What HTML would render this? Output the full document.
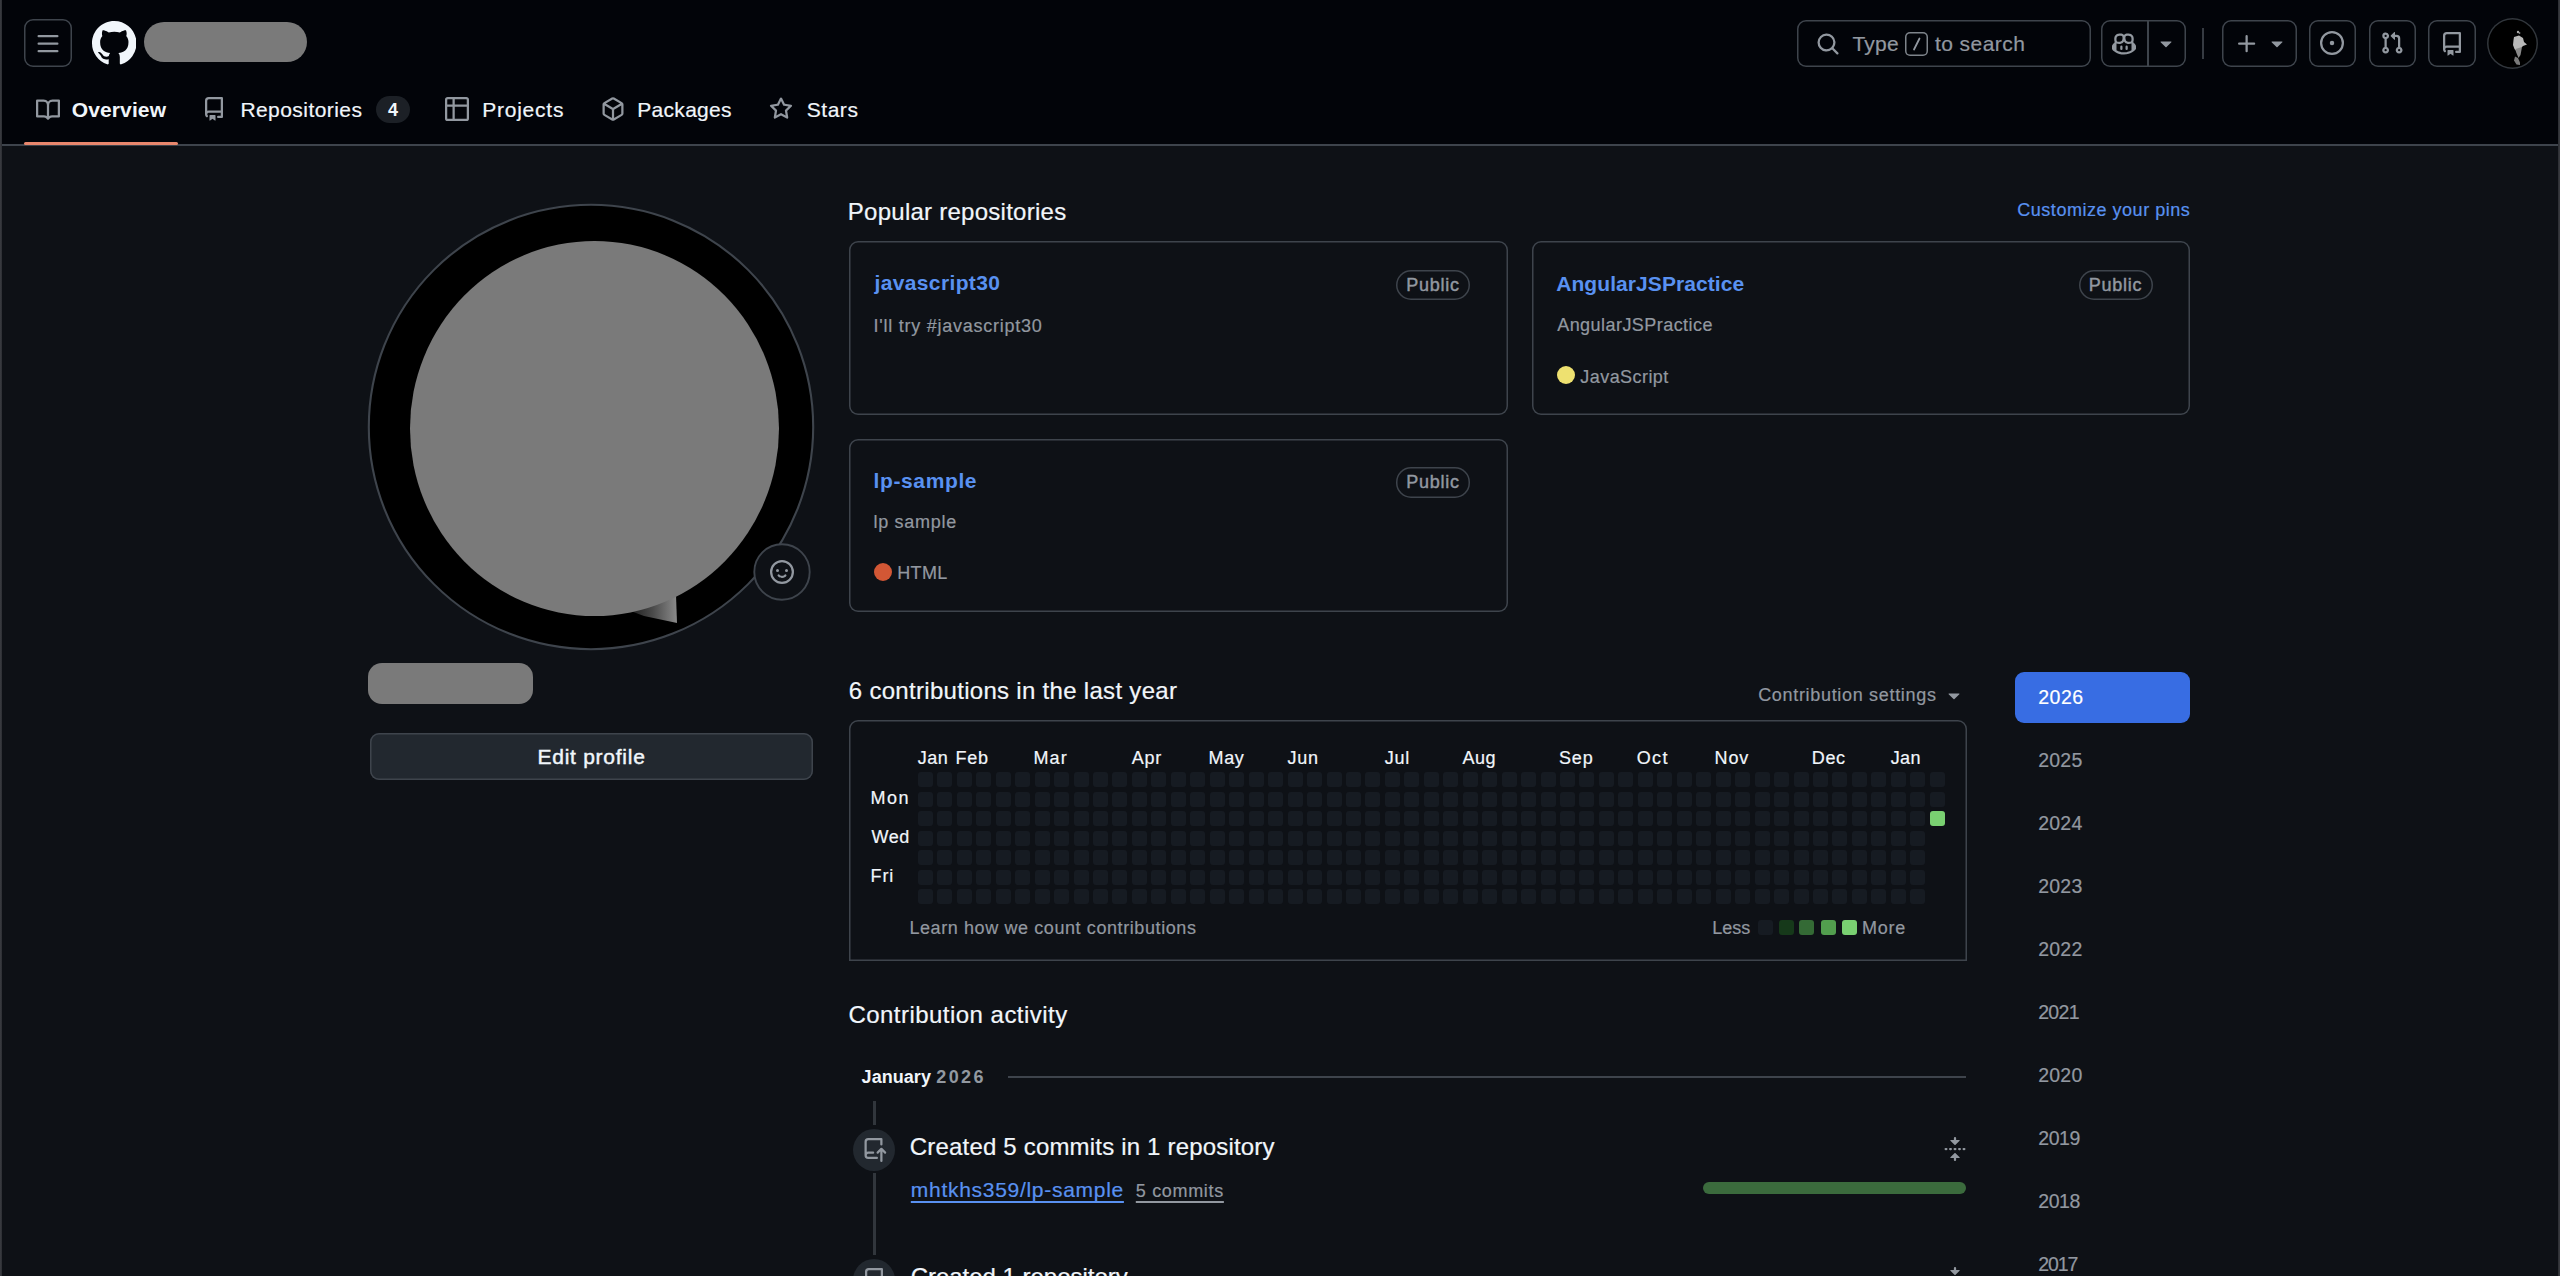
<!DOCTYPE html>
<html><head><meta charset="utf-8"><title>GitHub profile</title>
<style>
html,body{margin:0;padding:0;width:2560px;height:1276px;overflow:hidden;background:#0e1116;}
body{position:relative;font-family:"Liberation Sans",sans-serif;color:#f1f6fb;}
.t{position:absolute;white-space:nowrap;}
.a{position:absolute;box-sizing:border-box;}
.ic{position:absolute;width:24px;height:24px;fill:#9298a0;}
.bx{position:absolute;box-sizing:border-box;box-shadow:inset 0 0 0 1.5px #3e444c;border-radius:9px;}
#cells i{position:absolute;width:15px;height:15px;border-radius:3px;display:block;}
</style></head><body>
<!-- header -->
<div class="a" style="left:0;top:0;width:2560px;height:144px;background:#020409;"></div>
<div class="a" style="left:0;top:144px;width:2560px;height:1.5px;background:#3e444c;"></div>
<div class="a" style="left:24px;top:142px;width:154px;height:3px;background:#e8876d;border-radius:2px;"></div>

<div class="bx" style="left:24px;top:19px;width:48px;height:48px;"></div>
<svg class="ic" style="left:36px;top:31.5px;" viewBox="0 0 16 16"><path d="M1 2.75A.75.75 0 0 1 1.75 2h12.5a.75.75 0 0 1 0 1.5H1.75A.75.75 0 0 1 1 2.75Zm0 5A.75.75 0 0 1 1.75 7h12.5a.75.75 0 0 1 0 1.5H1.75A.75.75 0 0 1 1 7.75ZM1.75 12h12.5a.75.75 0 0 1 0 1.5H1.75a.75.75 0 0 1 0-1.5Z"/></svg>
<svg style="position:absolute;left:91.8px;top:21.3px;width:44.5px;height:44.5px;fill:#f1f6fb" viewBox="0 0 16 16"><path d="M8 0c4.42 0 8 3.58 8 8a8.013 8.013 0 0 1-5.45 7.59c-.4.08-.55-.17-.55-.38 0-.27.01-1.13.01-2.2 0-.75-.25-1.23-.54-1.48 1.78-.2 3.65-.88 3.65-3.95 0-.88-.31-1.59-.82-2.15.08-.2.36-1.02-.08-2.12 0 0-.67-.22-2.2.82-.64-.18-1.32-.27-2-.27-.68 0-1.36.09-2 .27-1.53-1.03-2.2-.82-2.2-.82-.44 1.1-.16 1.92-.08 2.12-.51.56-.82 1.28-.82 2.15 0 3.06 1.86 3.75 3.64 3.95-.23.2-.44.55-.51 1.07-.46.21-1.61.55-2.33-.66-.15-.24-.6-.83-1.23-.82-.67.01-.27.38.01.53.34.19.73.9.82 1.13.16.45.68 1.31 2.69.94 0 .67.01 1.3.01 1.49 0 .21-.15.45-.55.38A7.995 7.995 0 0 1 0 8c0-4.42 3.58-8 8-8Z"/></svg>
<div class="a" style="left:144px;top:22px;width:163px;height:40px;background:#7a7a7a;border-radius:20px;"></div>

<!-- tabs icons -->
<svg class="ic" style="left:36px;top:97.5px;" viewBox="0 0 16 16"><path d="M0 1.75A.75.75 0 0 1 .75 1h4.253c1.227 0 2.317.59 3 1.501A3.743 3.743 0 0 1 11.006 1h4.245a.75.75 0 0 1 .75.75v10.5a.75.75 0 0 1-.75.75h-4.507a2.25 2.25 0 0 0-1.591.659l-.622.621a.75.75 0 0 1-1.06 0l-.622-.621A2.25 2.25 0 0 0 5.258 13H.75a.75.75 0 0 1-.75-.75Zm7.251 10.324.004-5.073-.002-2.253A2.25 2.25 0 0 0 5.003 2.5H1.5v9h3.757a3.75 3.75 0 0 1 1.994.574ZM8.755 4.75l-.004 7.322a3.752 3.752 0 0 1 1.992-.572H14.5v-9h-3.495a2.25 2.25 0 0 0-2.25 2.25Z"/></svg>
<svg class="ic" style="left:202px;top:97px;" viewBox="0 0 16 16"><path d="M2 2.5A2.5 2.5 0 0 1 4.5 0h8.75a.75.75 0 0 1 .75.75v12.5a.75.75 0 0 1-.75.75h-2.5a.75.75 0 0 1 0-1.5h1.75v-2h-8a1 1 0 0 0-.714 1.7.75.75 0 1 1-1.072 1.05A2.495 2.495 0 0 1 2 11.5Zm10.5-1h-8a1 1 0 0 0-1 1v6.708A2.486 2.486 0 0 1 4.5 9h8ZM5 12.25a.25.25 0 0 1 .25-.25h3.5a.25.25 0 0 1 .25.25v3.25a.25.25 0 0 1-.4.2l-1.45-1.087a.249.249 0 0 0-.3 0L5.4 15.7a.25.25 0 0 1-.4-.2Z"/></svg>
<div class="a" style="left:376px;top:96px;width:34px;height:27px;border-radius:14px;background:#1c2026;"></div>
<svg class="ic" style="left:445px;top:97px;" viewBox="0 0 16 16"><path d="M0 1.75C0 .784.784 0 1.75 0h12.5C15.216 0 16 .784 16 1.75v12.5A1.75 1.75 0 0 1 14.25 16H1.75A1.75 1.75 0 0 1 0 14.25ZM6.5 6.5v8h7.75a.25.25 0 0 0 .25-.25V6.5Zm8-1.5V1.75a.25.25 0 0 0-.25-.25H6.5V5Zm-13 1.5v7.75c0 .138.112.25.25.25H5v-8ZM5 5V1.5H1.75a.25.25 0 0 0-.25.25V5Z"/></svg>
<svg class="ic" style="left:600.5px;top:97px;" viewBox="0 0 16 16"><path d="m8.878.392 5.25 3.045c.54.314.872.89.872 1.514v6.098a1.75 1.75 0 0 1-.872 1.514l-5.25 3.045a1.75 1.75 0 0 1-1.756 0l-5.25-3.045A1.75 1.75 0 0 1 1 11.049V4.951c0-.624.332-1.201.872-1.514L7.122.392a1.75 1.75 0 0 1 1.756 0ZM7.875 1.69l-4.63 2.685L8 7.133l4.755-2.758-4.63-2.685a.248.248 0 0 0-.25 0ZM2.5 5.677v5.372c0 .09.047.171.125.216l4.625 2.683V8.432Zm6.25 8.271 4.625-2.683a.25.25 0 0 0 .125-.216V5.677L8.75 8.432Z"/></svg>
<svg class="ic" style="left:769px;top:97px;" viewBox="0 0 16 16"><path d="M8 .25a.75.75 0 0 1 .673.418l1.882 3.815 4.21.612a.75.75 0 0 1 .416 1.279l-3.046 2.97.719 4.192a.751.751 0 0 1-1.088.791L8 12.347l-3.766 1.98a.75.75 0 0 1-1.088-.79l.72-4.194L.818 6.374a.75.75 0 0 1 .416-1.28l4.21-.611L7.327.668A.75.75 0 0 1 8 .25Zm0 2.445L6.615 5.5a.75.75 0 0 1-.564.41l-3.097.45 2.24 2.184a.75.75 0 0 1 .216.664l-.528 3.084 2.769-1.456a.75.75 0 0 1 .698 0l2.77 1.456-.53-3.084a.75.75 0 0 1 .216-.664l2.24-2.183-3.096-.45a.75.75 0 0 1-.564-.41L8 2.694Z"/></svg>

<!-- header right -->
<div class="bx" style="left:1797px;top:20px;width:294px;height:47px;"></div>
<svg class="ic" style="left:1816px;top:32px;" viewBox="0 0 16 16"><path d="M10.68 11.74a6 6 0 0 1-7.922-8.982 6 6 0 0 1 8.982 7.922l3.04 3.04a.749.749 0 0 1-.326 1.275.749.749 0 0 1-.734-.215ZM11.5 7a4.499 4.499 0 1 0-8.997 0A4.499 4.499 0 0 0 11.5 7Z"/></svg>
<div class="a" style="left:1904.5px;top:31.5px;width:23.5px;height:24px;box-shadow:inset 0 0 0 1.5px #7e848b;border-radius:5px;"></div>
<svg style="position:absolute;left:1904.5px;top:31.5px;width:23.5px;height:24px;" viewBox="0 0 23.5 24"><path d="M14.5 6.5 L9 17.5" stroke="#9298a0" stroke-width="1.8" fill="none" stroke-linecap="round"/></svg>

<div class="bx" style="left:2100.5px;top:20px;width:85px;height:47px;"></div>
<div class="a" style="left:2147px;top:20px;width:1.5px;height:47px;background:#3e444c;"></div>
<svg class="ic" style="left:2112px;top:32px;" viewBox="0 0 16 16"><path d="M7.998 15.035c-4.562 0-7.873-2.914-7.998-3.749V9.338c.085-.628.677-1.686 1.588-2.065.013-.07.024-.143.036-.218.029-.183.06-.384.126-.612-.201-.508-.254-1.084-.254-1.656 0-.87.128-1.769.693-2.484.579-.733 1.494-1.124 2.724-1.261 1.206-.134 2.262.034 2.944.765.05.053.096.108.139.165.044-.057.094-.112.143-.165.682-.731 1.738-.899 2.944-.765 1.23.137 2.145.528 2.724 1.261.566.715.693 1.614.693 2.484 0 .572-.053 1.148-.254 1.656.066.228.098.429.126.612.012.076.024.148.037.218.924.385 1.522 1.471 1.591 2.095v1.872c0 .766-3.351 3.795-8.002 3.795Zm0-1.485c2.28 0 4.584-1.11 5.002-1.433V7.862l-.023-.116c-.49.21-1.075.291-1.727.291-1.146 0-2.059-.327-2.71-.991A3.222 3.222 0 0 1 8 6.303a3.24 3.24 0 0 1-.544.743c-.65.664-1.563.991-2.71.991-.652 0-1.236-.081-1.727-.291l-.023.116v4.255c.419.323 2.722 1.433 5.002 1.433ZM6.762 2.83c-.193-.206-.637-.413-1.682-.297-1.019.113-1.479.404-1.713.7-.247.312-.369.789-.369 1.554 0 .793.129 1.171.308 1.371.162.181.519.379 1.442.379.853 0 1.339-.235 1.638-.54.315-.322.527-.827.617-1.553.117-.935-.037-1.395-.241-1.614Zm4.155-.297c-1.044-.116-1.488.091-1.681.297-.204.219-.359.679-.242 1.614.091.726.303 1.231.618 1.553.299.305.784.54 1.638.54.922 0 1.28-.198 1.442-.379.179-.2.308-.578.308-1.371 0-.765-.123-1.242-.37-1.554-.233-.296-.693-.587-1.713-.7Z"/><path d="M6.25 9.037a.75.75 0 0 1 .75.75v1.501a.75.75 0 0 1-1.5 0V9.787a.75.75 0 0 1 .75-.75Zm4.25.75v1.501a.75.75 0 0 1-1.5 0V9.787a.75.75 0 0 1 1.5 0Z"/></svg>
<svg class="ic" style="left:2153.5px;top:31px;" viewBox="0 0 16 16"><path d="m4.427 7.427 3.396 3.396a.25.25 0 0 0 .354 0l3.396-3.396A.25.25 0 0 0 11.396 7H4.604a.25.25 0 0 0-.177.427Z"/></svg>
<div class="a" style="left:2202px;top:28px;width:2px;height:30.5px;background:#363b42;"></div>

<div class="bx" style="left:2222px;top:20px;width:74.5px;height:47px;"></div>
<svg class="ic" style="left:2235px;top:31.5px;" viewBox="0 0 16 16"><path d="M7.75 2a.75.75 0 0 1 .75.75V7h4.25a.75.75 0 0 1 0 1.5H8.5v4.25a.75.75 0 0 1-1.5 0V8.5H2.75a.75.75 0 0 1 0-1.5H7V2.75A.75.75 0 0 1 7.75 2Z"/></svg>
<svg class="ic" style="left:2265px;top:31px;" viewBox="0 0 16 16"><path d="m4.427 7.427 3.396 3.396a.25.25 0 0 0 .354 0l3.396-3.396A.25.25 0 0 0 11.396 7H4.604a.25.25 0 0 0-.177.427Z"/></svg>
<div class="bx" style="left:2308.5px;top:20px;width:47.5px;height:47px;"></div>
<svg class="ic" style="left:2320px;top:31px;" viewBox="0 0 16 16"><path d="M8 9.5a1.5 1.5 0 1 0 0-3 1.5 1.5 0 0 0 0 3Z"/><path d="M8 0a8 8 0 1 1 0 16A8 8 0 0 1 8 0ZM1.5 8a6.5 6.5 0 1 0 13 0 6.5 6.5 0 0 0-13 0Z"/></svg>
<div class="bx" style="left:2368.5px;top:20px;width:47.5px;height:47px;"></div>
<svg class="ic" style="left:2379.8px;top:31px;" viewBox="0 0 16 16"><path d="M1.5 3.25a2.25 2.25 0 1 1 3 2.122v5.256a2.251 2.251 0 1 1-1.5 0V5.372A2.25 2.25 0 0 1 1.5 3.25Zm5.677-.177L9.573.677A.25.25 0 0 1 10 .854V2.5h1A2.5 2.5 0 0 1 13.5 5v5.628a2.251 2.251 0 1 1-1.5 0V5a1 1 0 0 0-1-1h-1v1.646a.25.25 0 0 1-.427.177L7.177 3.427a.25.25 0 0 1 0-.354ZM3.75 2.5a.75.75 0 1 0 0 1.5.75.75 0 0 0 0-1.5Zm0 9.5a.75.75 0 1 0 0 1.5.75.75 0 0 0 0-1.5Zm8.25.75a.75.75 0 1 0 1.5 0 .75.75 0 0 0-1.5 0Z"/></svg>
<div class="bx" style="left:2428px;top:20px;width:48px;height:47px;"></div>
<svg class="ic" style="left:2440px;top:31.5px;" viewBox="0 0 16 16"><path d="M2 2.5A2.5 2.5 0 0 1 4.5 0h8.75a.75.75 0 0 1 .75.75v12.5a.75.75 0 0 1-.75.75h-2.5a.75.75 0 0 1 0-1.5h1.75v-2h-8a1 1 0 0 0-.714 1.7.75.75 0 1 1-1.072 1.05A2.495 2.495 0 0 1 2 11.5Zm10.5-1h-8a1 1 0 0 0-1 1v6.708A2.486 2.486 0 0 1 4.5 9h8ZM5 12.25a.25.25 0 0 1 .25-.25h3.5a.25.25 0 0 1 .25.25v3.25a.25.25 0 0 1-.4.2l-1.45-1.087a.249.249 0 0 0-.3 0L5.4 15.7a.25.25 0 0 1-.4-.2Z"/></svg>
<div class="a" style="left:2486.5px;top:17.7px;width:51px;height:51px;border-radius:50%;background:#000;box-shadow:inset 0 0 0 1.5px #31363c;"></div>
<svg style="position:absolute;left:2486.5px;top:17.7px;width:51px;height:51px" viewBox="0 0 51 51"><path d="M27 19 L32 17.5 L36 20 L37 24 L40 26.5 L36 28 L33 31 L30 34 L27.5 31 L26 27 L26.5 22 Z" fill="#b8b8b8"/><path d="M28.5 31 L35 29 L33.5 37 L31.5 40 L29 34 Z" fill="#8a8a8a"/><path d="M28 38.5 L31 40 L33 44.5 L33 47 L29.5 46.5 L27 42.5 Z" fill="#7a7a7a"/><circle cx="31" cy="14" r="1.2" fill="#aaa"/><circle cx="32.5" cy="15" r="0.9" fill="#888"/></svg>

<!-- window edges -->
<div class="a" style="left:0;top:0;width:2px;height:1276px;background:linear-gradient(90deg,#3c3e43,#2b2d32);"></div>
<div class="a" style="left:2557.5px;top:0;width:2.5px;height:1276px;background:linear-gradient(90deg,#2b2d32,#3c3e43);"></div>

<!-- sidebar -->
<svg style="position:absolute;left:361.25px;top:196.6px;width:460px;height:460px" viewBox="0 0 460 460"><circle cx="230" cy="230" r="222.2" fill="#000" stroke="#3e444c" stroke-width="2.1"/></svg>
<svg style="position:absolute;left:620px;top:590px;width:70px;height:40px" viewBox="0 0 70 40"><defs><linearGradient id="g1" x1="0" x2="1"><stop offset="0" stop-color="#1a1a1a"/><stop offset="0.5" stop-color="#4a4a4a"/><stop offset="1" stop-color="#8a8a8a"/></linearGradient></defs><path d="M8 20 L56 5 L57 33 L24 26 Z" fill="url(#g1)"/></svg>
<div class="a" style="left:409.5px;top:240.7px;width:369.3px;height:375px;border-radius:50%;background:#7a7a7a;"></div>
<svg style="position:absolute;left:751.5px;top:542px;width:60px;height:60px" viewBox="0 0 60 60"><circle cx="30" cy="30" r="27.7" fill="#0e1116" stroke="#3e444c" stroke-width="1.9"/></svg>
<svg class="ic" style="left:769.5px;top:560px;" viewBox="0 0 16 16"><path d="M8 0a8 8 0 1 1 0 16A8 8 0 0 1 8 0ZM1.5 8a6.5 6.5 0 1 0 13 0 6.5 6.5 0 0 0-13 0Zm3.82 1.636a.75.75 0 0 1 1.038.175l.007.009c.103.118.22.222.35.31.264.178.683.37 1.285.37.602 0 1.02-.192 1.285-.371.13-.088.247-.192.35-.31l.007-.008a.75.75 0 0 1 1.222.87l-.022-.015c.02.013.021.015.021.015v.001l-.001.002-.002.003-.005.007-.014.019a2.066 2.066 0 0 1-.184.213c-.16.166-.338.316-.53.445-.63.418-1.37.638-2.127.629-.946 0-1.652-.308-2.126-.63a3.331 3.331 0 0 1-.715-.657l-.014-.02-.005-.006-.002-.003v-.002h-.001l.613-.432-.614.43a.75.75 0 0 1 .183-1.044ZM12 7a1 1 0 1 1-2 0 1 1 0 0 1 2 0ZM5 8a1 1 0 1 1 0-2 1 1 0 0 1 0 2Zm5.25 2.25.592.416a97.71 97.71 0 0 0-.592-.416Z"/></svg>
<div class="a" style="left:368.4px;top:663px;width:164.5px;height:41px;border-radius:14px;background:#7a7a7a;"></div>
<div class="bx" style="left:370px;top:732.5px;width:443px;height:47.5px;background:#22282f;"></div>

<!-- popular repos -->
<div class="bx" style="left:849px;top:241px;width:658.5px;height:174px;"></div>
<div class="bx" style="left:1531.5px;top:241px;width:658.5px;height:174px;"></div>
<div class="bx" style="left:849px;top:439px;width:658.5px;height:172.5px;"></div>
<div class="bx" style="left:1396px;top:269.5px;width:74px;height:30.5px;border-radius:15px;"></div>
<div class="bx" style="left:2078.5px;top:269.5px;width:74px;height:30.5px;border-radius:15px;"></div>
<div class="bx" style="left:1396px;top:467px;width:74px;height:30.5px;border-radius:15px;"></div>
<div class="a" style="left:1557px;top:366px;width:18px;height:18px;border-radius:50%;background:#eee170;"></div>
<div class="a" style="left:874.2px;top:563px;width:18px;height:18px;border-radius:50%;background:#d25735;"></div>

<!-- contributions -->
<svg class="ic" style="left:1942px;top:683px;" viewBox="0 0 16 16"><path d="m4.427 7.427 3.396 3.396a.25.25 0 0 0 .354 0l3.396-3.396A.25.25 0 0 0 11.396 7H4.604a.25.25 0 0 0-.177.427Z"/></svg>
<div class="bx" style="left:849px;top:720px;width:1117.5px;height:241px;border-radius:9px 9px 0 0;"></div>
<div id="cells"><i style="left:917.8px;top:772.0px;background:#161b22"></i><i style="left:917.8px;top:791.5px;background:#161b22"></i><i style="left:917.8px;top:811.0px;background:#161b22"></i><i style="left:917.8px;top:830.5px;background:#161b22"></i><i style="left:917.8px;top:850.0px;background:#161b22"></i><i style="left:917.8px;top:869.5px;background:#161b22"></i><i style="left:917.8px;top:889.0px;background:#161b22"></i><i style="left:937.3px;top:772.0px;background:#161b22"></i><i style="left:937.3px;top:791.5px;background:#161b22"></i><i style="left:937.3px;top:811.0px;background:#161b22"></i><i style="left:937.3px;top:830.5px;background:#161b22"></i><i style="left:937.3px;top:850.0px;background:#161b22"></i><i style="left:937.3px;top:869.5px;background:#161b22"></i><i style="left:937.3px;top:889.0px;background:#161b22"></i><i style="left:956.7px;top:772.0px;background:#161b22"></i><i style="left:956.7px;top:791.5px;background:#161b22"></i><i style="left:956.7px;top:811.0px;background:#161b22"></i><i style="left:956.7px;top:830.5px;background:#161b22"></i><i style="left:956.7px;top:850.0px;background:#161b22"></i><i style="left:956.7px;top:869.5px;background:#161b22"></i><i style="left:956.7px;top:889.0px;background:#161b22"></i><i style="left:976.2px;top:772.0px;background:#161b22"></i><i style="left:976.2px;top:791.5px;background:#161b22"></i><i style="left:976.2px;top:811.0px;background:#161b22"></i><i style="left:976.2px;top:830.5px;background:#161b22"></i><i style="left:976.2px;top:850.0px;background:#161b22"></i><i style="left:976.2px;top:869.5px;background:#161b22"></i><i style="left:976.2px;top:889.0px;background:#161b22"></i><i style="left:995.6px;top:772.0px;background:#161b22"></i><i style="left:995.6px;top:791.5px;background:#161b22"></i><i style="left:995.6px;top:811.0px;background:#161b22"></i><i style="left:995.6px;top:830.5px;background:#161b22"></i><i style="left:995.6px;top:850.0px;background:#161b22"></i><i style="left:995.6px;top:869.5px;background:#161b22"></i><i style="left:995.6px;top:889.0px;background:#161b22"></i><i style="left:1015.1px;top:772.0px;background:#161b22"></i><i style="left:1015.1px;top:791.5px;background:#161b22"></i><i style="left:1015.1px;top:811.0px;background:#161b22"></i><i style="left:1015.1px;top:830.5px;background:#161b22"></i><i style="left:1015.1px;top:850.0px;background:#161b22"></i><i style="left:1015.1px;top:869.5px;background:#161b22"></i><i style="left:1015.1px;top:889.0px;background:#161b22"></i><i style="left:1034.6px;top:772.0px;background:#161b22"></i><i style="left:1034.6px;top:791.5px;background:#161b22"></i><i style="left:1034.6px;top:811.0px;background:#161b22"></i><i style="left:1034.6px;top:830.5px;background:#161b22"></i><i style="left:1034.6px;top:850.0px;background:#161b22"></i><i style="left:1034.6px;top:869.5px;background:#161b22"></i><i style="left:1034.6px;top:889.0px;background:#161b22"></i><i style="left:1054.0px;top:772.0px;background:#161b22"></i><i style="left:1054.0px;top:791.5px;background:#161b22"></i><i style="left:1054.0px;top:811.0px;background:#161b22"></i><i style="left:1054.0px;top:830.5px;background:#161b22"></i><i style="left:1054.0px;top:850.0px;background:#161b22"></i><i style="left:1054.0px;top:869.5px;background:#161b22"></i><i style="left:1054.0px;top:889.0px;background:#161b22"></i><i style="left:1073.5px;top:772.0px;background:#161b22"></i><i style="left:1073.5px;top:791.5px;background:#161b22"></i><i style="left:1073.5px;top:811.0px;background:#161b22"></i><i style="left:1073.5px;top:830.5px;background:#161b22"></i><i style="left:1073.5px;top:850.0px;background:#161b22"></i><i style="left:1073.5px;top:869.5px;background:#161b22"></i><i style="left:1073.5px;top:889.0px;background:#161b22"></i><i style="left:1092.9px;top:772.0px;background:#161b22"></i><i style="left:1092.9px;top:791.5px;background:#161b22"></i><i style="left:1092.9px;top:811.0px;background:#161b22"></i><i style="left:1092.9px;top:830.5px;background:#161b22"></i><i style="left:1092.9px;top:850.0px;background:#161b22"></i><i style="left:1092.9px;top:869.5px;background:#161b22"></i><i style="left:1092.9px;top:889.0px;background:#161b22"></i><i style="left:1112.4px;top:772.0px;background:#161b22"></i><i style="left:1112.4px;top:791.5px;background:#161b22"></i><i style="left:1112.4px;top:811.0px;background:#161b22"></i><i style="left:1112.4px;top:830.5px;background:#161b22"></i><i style="left:1112.4px;top:850.0px;background:#161b22"></i><i style="left:1112.4px;top:869.5px;background:#161b22"></i><i style="left:1112.4px;top:889.0px;background:#161b22"></i><i style="left:1131.9px;top:772.0px;background:#161b22"></i><i style="left:1131.9px;top:791.5px;background:#161b22"></i><i style="left:1131.9px;top:811.0px;background:#161b22"></i><i style="left:1131.9px;top:830.5px;background:#161b22"></i><i style="left:1131.9px;top:850.0px;background:#161b22"></i><i style="left:1131.9px;top:869.5px;background:#161b22"></i><i style="left:1131.9px;top:889.0px;background:#161b22"></i><i style="left:1151.3px;top:772.0px;background:#161b22"></i><i style="left:1151.3px;top:791.5px;background:#161b22"></i><i style="left:1151.3px;top:811.0px;background:#161b22"></i><i style="left:1151.3px;top:830.5px;background:#161b22"></i><i style="left:1151.3px;top:850.0px;background:#161b22"></i><i style="left:1151.3px;top:869.5px;background:#161b22"></i><i style="left:1151.3px;top:889.0px;background:#161b22"></i><i style="left:1170.8px;top:772.0px;background:#161b22"></i><i style="left:1170.8px;top:791.5px;background:#161b22"></i><i style="left:1170.8px;top:811.0px;background:#161b22"></i><i style="left:1170.8px;top:830.5px;background:#161b22"></i><i style="left:1170.8px;top:850.0px;background:#161b22"></i><i style="left:1170.8px;top:869.5px;background:#161b22"></i><i style="left:1170.8px;top:889.0px;background:#161b22"></i><i style="left:1190.2px;top:772.0px;background:#161b22"></i><i style="left:1190.2px;top:791.5px;background:#161b22"></i><i style="left:1190.2px;top:811.0px;background:#161b22"></i><i style="left:1190.2px;top:830.5px;background:#161b22"></i><i style="left:1190.2px;top:850.0px;background:#161b22"></i><i style="left:1190.2px;top:869.5px;background:#161b22"></i><i style="left:1190.2px;top:889.0px;background:#161b22"></i><i style="left:1209.7px;top:772.0px;background:#161b22"></i><i style="left:1209.7px;top:791.5px;background:#161b22"></i><i style="left:1209.7px;top:811.0px;background:#161b22"></i><i style="left:1209.7px;top:830.5px;background:#161b22"></i><i style="left:1209.7px;top:850.0px;background:#161b22"></i><i style="left:1209.7px;top:869.5px;background:#161b22"></i><i style="left:1209.7px;top:889.0px;background:#161b22"></i><i style="left:1229.2px;top:772.0px;background:#161b22"></i><i style="left:1229.2px;top:791.5px;background:#161b22"></i><i style="left:1229.2px;top:811.0px;background:#161b22"></i><i style="left:1229.2px;top:830.5px;background:#161b22"></i><i style="left:1229.2px;top:850.0px;background:#161b22"></i><i style="left:1229.2px;top:869.5px;background:#161b22"></i><i style="left:1229.2px;top:889.0px;background:#161b22"></i><i style="left:1248.6px;top:772.0px;background:#161b22"></i><i style="left:1248.6px;top:791.5px;background:#161b22"></i><i style="left:1248.6px;top:811.0px;background:#161b22"></i><i style="left:1248.6px;top:830.5px;background:#161b22"></i><i style="left:1248.6px;top:850.0px;background:#161b22"></i><i style="left:1248.6px;top:869.5px;background:#161b22"></i><i style="left:1248.6px;top:889.0px;background:#161b22"></i><i style="left:1268.1px;top:772.0px;background:#161b22"></i><i style="left:1268.1px;top:791.5px;background:#161b22"></i><i style="left:1268.1px;top:811.0px;background:#161b22"></i><i style="left:1268.1px;top:830.5px;background:#161b22"></i><i style="left:1268.1px;top:850.0px;background:#161b22"></i><i style="left:1268.1px;top:869.5px;background:#161b22"></i><i style="left:1268.1px;top:889.0px;background:#161b22"></i><i style="left:1287.5px;top:772.0px;background:#161b22"></i><i style="left:1287.5px;top:791.5px;background:#161b22"></i><i style="left:1287.5px;top:811.0px;background:#161b22"></i><i style="left:1287.5px;top:830.5px;background:#161b22"></i><i style="left:1287.5px;top:850.0px;background:#161b22"></i><i style="left:1287.5px;top:869.5px;background:#161b22"></i><i style="left:1287.5px;top:889.0px;background:#161b22"></i><i style="left:1307.0px;top:772.0px;background:#161b22"></i><i style="left:1307.0px;top:791.5px;background:#161b22"></i><i style="left:1307.0px;top:811.0px;background:#161b22"></i><i style="left:1307.0px;top:830.5px;background:#161b22"></i><i style="left:1307.0px;top:850.0px;background:#161b22"></i><i style="left:1307.0px;top:869.5px;background:#161b22"></i><i style="left:1307.0px;top:889.0px;background:#161b22"></i><i style="left:1326.5px;top:772.0px;background:#161b22"></i><i style="left:1326.5px;top:791.5px;background:#161b22"></i><i style="left:1326.5px;top:811.0px;background:#161b22"></i><i style="left:1326.5px;top:830.5px;background:#161b22"></i><i style="left:1326.5px;top:850.0px;background:#161b22"></i><i style="left:1326.5px;top:869.5px;background:#161b22"></i><i style="left:1326.5px;top:889.0px;background:#161b22"></i><i style="left:1345.9px;top:772.0px;background:#161b22"></i><i style="left:1345.9px;top:791.5px;background:#161b22"></i><i style="left:1345.9px;top:811.0px;background:#161b22"></i><i style="left:1345.9px;top:830.5px;background:#161b22"></i><i style="left:1345.9px;top:850.0px;background:#161b22"></i><i style="left:1345.9px;top:869.5px;background:#161b22"></i><i style="left:1345.9px;top:889.0px;background:#161b22"></i><i style="left:1365.4px;top:772.0px;background:#161b22"></i><i style="left:1365.4px;top:791.5px;background:#161b22"></i><i style="left:1365.4px;top:811.0px;background:#161b22"></i><i style="left:1365.4px;top:830.5px;background:#161b22"></i><i style="left:1365.4px;top:850.0px;background:#161b22"></i><i style="left:1365.4px;top:869.5px;background:#161b22"></i><i style="left:1365.4px;top:889.0px;background:#161b22"></i><i style="left:1384.8px;top:772.0px;background:#161b22"></i><i style="left:1384.8px;top:791.5px;background:#161b22"></i><i style="left:1384.8px;top:811.0px;background:#161b22"></i><i style="left:1384.8px;top:830.5px;background:#161b22"></i><i style="left:1384.8px;top:850.0px;background:#161b22"></i><i style="left:1384.8px;top:869.5px;background:#161b22"></i><i style="left:1384.8px;top:889.0px;background:#161b22"></i><i style="left:1404.3px;top:772.0px;background:#161b22"></i><i style="left:1404.3px;top:791.5px;background:#161b22"></i><i style="left:1404.3px;top:811.0px;background:#161b22"></i><i style="left:1404.3px;top:830.5px;background:#161b22"></i><i style="left:1404.3px;top:850.0px;background:#161b22"></i><i style="left:1404.3px;top:869.5px;background:#161b22"></i><i style="left:1404.3px;top:889.0px;background:#161b22"></i><i style="left:1423.8px;top:772.0px;background:#161b22"></i><i style="left:1423.8px;top:791.5px;background:#161b22"></i><i style="left:1423.8px;top:811.0px;background:#161b22"></i><i style="left:1423.8px;top:830.5px;background:#161b22"></i><i style="left:1423.8px;top:850.0px;background:#161b22"></i><i style="left:1423.8px;top:869.5px;background:#161b22"></i><i style="left:1423.8px;top:889.0px;background:#161b22"></i><i style="left:1443.2px;top:772.0px;background:#161b22"></i><i style="left:1443.2px;top:791.5px;background:#161b22"></i><i style="left:1443.2px;top:811.0px;background:#161b22"></i><i style="left:1443.2px;top:830.5px;background:#161b22"></i><i style="left:1443.2px;top:850.0px;background:#161b22"></i><i style="left:1443.2px;top:869.5px;background:#161b22"></i><i style="left:1443.2px;top:889.0px;background:#161b22"></i><i style="left:1462.7px;top:772.0px;background:#161b22"></i><i style="left:1462.7px;top:791.5px;background:#161b22"></i><i style="left:1462.7px;top:811.0px;background:#161b22"></i><i style="left:1462.7px;top:830.5px;background:#161b22"></i><i style="left:1462.7px;top:850.0px;background:#161b22"></i><i style="left:1462.7px;top:869.5px;background:#161b22"></i><i style="left:1462.7px;top:889.0px;background:#161b22"></i><i style="left:1482.1px;top:772.0px;background:#161b22"></i><i style="left:1482.1px;top:791.5px;background:#161b22"></i><i style="left:1482.1px;top:811.0px;background:#161b22"></i><i style="left:1482.1px;top:830.5px;background:#161b22"></i><i style="left:1482.1px;top:850.0px;background:#161b22"></i><i style="left:1482.1px;top:869.5px;background:#161b22"></i><i style="left:1482.1px;top:889.0px;background:#161b22"></i><i style="left:1501.6px;top:772.0px;background:#161b22"></i><i style="left:1501.6px;top:791.5px;background:#161b22"></i><i style="left:1501.6px;top:811.0px;background:#161b22"></i><i style="left:1501.6px;top:830.5px;background:#161b22"></i><i style="left:1501.6px;top:850.0px;background:#161b22"></i><i style="left:1501.6px;top:869.5px;background:#161b22"></i><i style="left:1501.6px;top:889.0px;background:#161b22"></i><i style="left:1521.1px;top:772.0px;background:#161b22"></i><i style="left:1521.1px;top:791.5px;background:#161b22"></i><i style="left:1521.1px;top:811.0px;background:#161b22"></i><i style="left:1521.1px;top:830.5px;background:#161b22"></i><i style="left:1521.1px;top:850.0px;background:#161b22"></i><i style="left:1521.1px;top:869.5px;background:#161b22"></i><i style="left:1521.1px;top:889.0px;background:#161b22"></i><i style="left:1540.5px;top:772.0px;background:#161b22"></i><i style="left:1540.5px;top:791.5px;background:#161b22"></i><i style="left:1540.5px;top:811.0px;background:#161b22"></i><i style="left:1540.5px;top:830.5px;background:#161b22"></i><i style="left:1540.5px;top:850.0px;background:#161b22"></i><i style="left:1540.5px;top:869.5px;background:#161b22"></i><i style="left:1540.5px;top:889.0px;background:#161b22"></i><i style="left:1560.0px;top:772.0px;background:#161b22"></i><i style="left:1560.0px;top:791.5px;background:#161b22"></i><i style="left:1560.0px;top:811.0px;background:#161b22"></i><i style="left:1560.0px;top:830.5px;background:#161b22"></i><i style="left:1560.0px;top:850.0px;background:#161b22"></i><i style="left:1560.0px;top:869.5px;background:#161b22"></i><i style="left:1560.0px;top:889.0px;background:#161b22"></i><i style="left:1579.4px;top:772.0px;background:#161b22"></i><i style="left:1579.4px;top:791.5px;background:#161b22"></i><i style="left:1579.4px;top:811.0px;background:#161b22"></i><i style="left:1579.4px;top:830.5px;background:#161b22"></i><i style="left:1579.4px;top:850.0px;background:#161b22"></i><i style="left:1579.4px;top:869.5px;background:#161b22"></i><i style="left:1579.4px;top:889.0px;background:#161b22"></i><i style="left:1598.9px;top:772.0px;background:#161b22"></i><i style="left:1598.9px;top:791.5px;background:#161b22"></i><i style="left:1598.9px;top:811.0px;background:#161b22"></i><i style="left:1598.9px;top:830.5px;background:#161b22"></i><i style="left:1598.9px;top:850.0px;background:#161b22"></i><i style="left:1598.9px;top:869.5px;background:#161b22"></i><i style="left:1598.9px;top:889.0px;background:#161b22"></i><i style="left:1618.4px;top:772.0px;background:#161b22"></i><i style="left:1618.4px;top:791.5px;background:#161b22"></i><i style="left:1618.4px;top:811.0px;background:#161b22"></i><i style="left:1618.4px;top:830.5px;background:#161b22"></i><i style="left:1618.4px;top:850.0px;background:#161b22"></i><i style="left:1618.4px;top:869.5px;background:#161b22"></i><i style="left:1618.4px;top:889.0px;background:#161b22"></i><i style="left:1637.8px;top:772.0px;background:#161b22"></i><i style="left:1637.8px;top:791.5px;background:#161b22"></i><i style="left:1637.8px;top:811.0px;background:#161b22"></i><i style="left:1637.8px;top:830.5px;background:#161b22"></i><i style="left:1637.8px;top:850.0px;background:#161b22"></i><i style="left:1637.8px;top:869.5px;background:#161b22"></i><i style="left:1637.8px;top:889.0px;background:#161b22"></i><i style="left:1657.3px;top:772.0px;background:#161b22"></i><i style="left:1657.3px;top:791.5px;background:#161b22"></i><i style="left:1657.3px;top:811.0px;background:#161b22"></i><i style="left:1657.3px;top:830.5px;background:#161b22"></i><i style="left:1657.3px;top:850.0px;background:#161b22"></i><i style="left:1657.3px;top:869.5px;background:#161b22"></i><i style="left:1657.3px;top:889.0px;background:#161b22"></i><i style="left:1676.7px;top:772.0px;background:#161b22"></i><i style="left:1676.7px;top:791.5px;background:#161b22"></i><i style="left:1676.7px;top:811.0px;background:#161b22"></i><i style="left:1676.7px;top:830.5px;background:#161b22"></i><i style="left:1676.7px;top:850.0px;background:#161b22"></i><i style="left:1676.7px;top:869.5px;background:#161b22"></i><i style="left:1676.7px;top:889.0px;background:#161b22"></i><i style="left:1696.2px;top:772.0px;background:#161b22"></i><i style="left:1696.2px;top:791.5px;background:#161b22"></i><i style="left:1696.2px;top:811.0px;background:#161b22"></i><i style="left:1696.2px;top:830.5px;background:#161b22"></i><i style="left:1696.2px;top:850.0px;background:#161b22"></i><i style="left:1696.2px;top:869.5px;background:#161b22"></i><i style="left:1696.2px;top:889.0px;background:#161b22"></i><i style="left:1715.7px;top:772.0px;background:#161b22"></i><i style="left:1715.7px;top:791.5px;background:#161b22"></i><i style="left:1715.7px;top:811.0px;background:#161b22"></i><i style="left:1715.7px;top:830.5px;background:#161b22"></i><i style="left:1715.7px;top:850.0px;background:#161b22"></i><i style="left:1715.7px;top:869.5px;background:#161b22"></i><i style="left:1715.7px;top:889.0px;background:#161b22"></i><i style="left:1735.1px;top:772.0px;background:#161b22"></i><i style="left:1735.1px;top:791.5px;background:#161b22"></i><i style="left:1735.1px;top:811.0px;background:#161b22"></i><i style="left:1735.1px;top:830.5px;background:#161b22"></i><i style="left:1735.1px;top:850.0px;background:#161b22"></i><i style="left:1735.1px;top:869.5px;background:#161b22"></i><i style="left:1735.1px;top:889.0px;background:#161b22"></i><i style="left:1754.6px;top:772.0px;background:#161b22"></i><i style="left:1754.6px;top:791.5px;background:#161b22"></i><i style="left:1754.6px;top:811.0px;background:#161b22"></i><i style="left:1754.6px;top:830.5px;background:#161b22"></i><i style="left:1754.6px;top:850.0px;background:#161b22"></i><i style="left:1754.6px;top:869.5px;background:#161b22"></i><i style="left:1754.6px;top:889.0px;background:#161b22"></i><i style="left:1774.0px;top:772.0px;background:#161b22"></i><i style="left:1774.0px;top:791.5px;background:#161b22"></i><i style="left:1774.0px;top:811.0px;background:#161b22"></i><i style="left:1774.0px;top:830.5px;background:#161b22"></i><i style="left:1774.0px;top:850.0px;background:#161b22"></i><i style="left:1774.0px;top:869.5px;background:#161b22"></i><i style="left:1774.0px;top:889.0px;background:#161b22"></i><i style="left:1793.5px;top:772.0px;background:#161b22"></i><i style="left:1793.5px;top:791.5px;background:#161b22"></i><i style="left:1793.5px;top:811.0px;background:#161b22"></i><i style="left:1793.5px;top:830.5px;background:#161b22"></i><i style="left:1793.5px;top:850.0px;background:#161b22"></i><i style="left:1793.5px;top:869.5px;background:#161b22"></i><i style="left:1793.5px;top:889.0px;background:#161b22"></i><i style="left:1813.0px;top:772.0px;background:#161b22"></i><i style="left:1813.0px;top:791.5px;background:#161b22"></i><i style="left:1813.0px;top:811.0px;background:#161b22"></i><i style="left:1813.0px;top:830.5px;background:#161b22"></i><i style="left:1813.0px;top:850.0px;background:#161b22"></i><i style="left:1813.0px;top:869.5px;background:#161b22"></i><i style="left:1813.0px;top:889.0px;background:#161b22"></i><i style="left:1832.4px;top:772.0px;background:#161b22"></i><i style="left:1832.4px;top:791.5px;background:#161b22"></i><i style="left:1832.4px;top:811.0px;background:#161b22"></i><i style="left:1832.4px;top:830.5px;background:#161b22"></i><i style="left:1832.4px;top:850.0px;background:#161b22"></i><i style="left:1832.4px;top:869.5px;background:#161b22"></i><i style="left:1832.4px;top:889.0px;background:#161b22"></i><i style="left:1851.9px;top:772.0px;background:#161b22"></i><i style="left:1851.9px;top:791.5px;background:#161b22"></i><i style="left:1851.9px;top:811.0px;background:#161b22"></i><i style="left:1851.9px;top:830.5px;background:#161b22"></i><i style="left:1851.9px;top:850.0px;background:#161b22"></i><i style="left:1851.9px;top:869.5px;background:#161b22"></i><i style="left:1851.9px;top:889.0px;background:#161b22"></i><i style="left:1871.3px;top:772.0px;background:#161b22"></i><i style="left:1871.3px;top:791.5px;background:#161b22"></i><i style="left:1871.3px;top:811.0px;background:#161b22"></i><i style="left:1871.3px;top:830.5px;background:#161b22"></i><i style="left:1871.3px;top:850.0px;background:#161b22"></i><i style="left:1871.3px;top:869.5px;background:#161b22"></i><i style="left:1871.3px;top:889.0px;background:#161b22"></i><i style="left:1890.8px;top:772.0px;background:#161b22"></i><i style="left:1890.8px;top:791.5px;background:#161b22"></i><i style="left:1890.8px;top:811.0px;background:#161b22"></i><i style="left:1890.8px;top:830.5px;background:#161b22"></i><i style="left:1890.8px;top:850.0px;background:#161b22"></i><i style="left:1890.8px;top:869.5px;background:#161b22"></i><i style="left:1890.8px;top:889.0px;background:#161b22"></i><i style="left:1910.3px;top:772.0px;background:#161b22"></i><i style="left:1910.3px;top:791.5px;background:#161b22"></i><i style="left:1910.3px;top:811.0px;background:#161b22"></i><i style="left:1910.3px;top:830.5px;background:#161b22"></i><i style="left:1910.3px;top:850.0px;background:#161b22"></i><i style="left:1910.3px;top:869.5px;background:#161b22"></i><i style="left:1910.3px;top:889.0px;background:#161b22"></i><i style="left:1929.7px;top:772.0px;background:#161b22"></i><i style="left:1929.7px;top:791.5px;background:#161b22"></i><i style="left:1929.7px;top:811.0px;background:#79d071"></i></div>
<div id="legend">
<div class="a" style="left:1757.7px;top:920.3px;width:15px;height:15px;border-radius:3px;background:#161b22;"></div>
<div class="a" style="left:1778.5px;top:920.3px;width:15px;height:15px;border-radius:3px;background:#16391a;"></div>
<div class="a" style="left:1799.3px;top:920.3px;width:15px;height:15px;border-radius:3px;background:#346a35;"></div>
<div class="a" style="left:1820.5px;top:920.3px;width:15px;height:15px;border-radius:3px;background:#529e4e;"></div>
<div class="a" style="left:1841.5px;top:920.3px;width:15px;height:15px;border-radius:3px;background:#79d071;"></div>
</div>
<div class="a" style="left:2014.5px;top:672px;width:175.5px;height:50.5px;border-radius:9px;background:#386de3;"></div>

<!-- activity -->
<div class="a" style="left:1007.5px;top:1076px;width:958.5px;height:1.5px;background:#3e444c;"></div>
<div class="a" style="left:873px;top:1101.3px;width:3px;height:24px;background:#31363c;"></div>
<div class="a" style="left:873px;top:1173.3px;width:3px;height:82px;background:#31363c;"></div>
<div class="a" style="left:853.3px;top:1128.5px;width:42px;height:42px;border-radius:50%;background:#22282f;"></div>
<svg class="ic" style="left:863.3px;top:1137.5px;" viewBox="0 0 16 16"><path d="M1 2.5A2.5 2.5 0 0 1 3.5 0h8.75a.75.75 0 0 1 .75.75v3.5a.75.75 0 0 1-1.5 0V1.5h-8a1 1 0 0 0-1 1v6.708A2.493 2.493 0 0 1 3.5 9h3.25a.75.75 0 0 1 0 1.5H3.5a1 1 0 0 0 0 2h5.75a.75.75 0 0 1 0 1.5H3.5A2.5 2.5 0 0 1 1 11.5Zm13.23 7.79h-.001l-1.224-1.224v6.184a.75.75 0 0 1-1.5 0V9.066L10.28 10.29a.75.75 0 0 1-1.06-1.061l2.505-2.504a.75.75 0 0 1 1.06 0L15.29 9.23a.751.751 0 0 1-.018 1.042.751.751 0 0 1-1.042.018Z"/></svg>
<svg class="ic" style="left:1942.5px;top:1137px;" viewBox="0 0 16 16"><path d="M10.896 2H8.75V.75a.75.75 0 0 0-1.5 0V2H5.104a.25.25 0 0 0-.177.427l2.896 2.896a.25.25 0 0 0 .354 0l2.896-2.896A.25.25 0 0 0 10.896 2ZM8.75 15.25a.75.75 0 0 1-1.5 0V14H5.104a.25.25 0 0 1-.177-.427l2.896-2.896a.25.25 0 0 1 .354 0l2.896 2.896a.25.25 0 0 1-.177.427H8.75v1.25Zm-6.5-6.5a.75.75 0 0 0 0-1.5h-.5a.75.75 0 0 0 0 1.5h.5ZM6 8a.75.75 0 0 1-.75.75h-.5a.75.75 0 0 1 0-1.5h.5A.75.75 0 0 1 6 8Zm2.25.75a.75.75 0 0 0 0-1.5h-.5a.75.75 0 0 0 0 1.5h.5ZM12 8a.75.75 0 0 1-.75.75h-.5a.75.75 0 0 1 0-1.5h.5A.75.75 0 0 1 12 8Zm2.25.75a.75.75 0 0 0 0-1.5h-.5a.75.75 0 0 0 0 1.5h.5Z"/></svg>
<div class="a" style="left:1702.8px;top:1181.5px;width:263.2px;height:12px;border-radius:6px;background:#3b6b3d;"></div>
<div class="a" style="left:853.3px;top:1258.5px;width:42px;height:42px;border-radius:50%;background:#22282f;"></div>
<svg class="ic" style="left:862.3px;top:1267.5px;" viewBox="0 0 16 16"><path d="M2 2.5A2.5 2.5 0 0 1 4.5 0h8.75a.75.75 0 0 1 .75.75v12.5a.75.75 0 0 1-.75.75h-2.5a.75.75 0 0 1 0-1.5h1.75v-2h-8a1 1 0 0 0-.714 1.7.75.75 0 1 1-1.072 1.05A2.495 2.495 0 0 1 2 11.5Zm10.5-1h-8a1 1 0 0 0-1 1v6.708A2.486 2.486 0 0 1 4.5 9h8ZM5 12.25a.25.25 0 0 1 .25-.25h3.5a.25.25 0 0 1 .25.25v3.25a.25.25 0 0 1-.4.2l-1.45-1.087a.249.249 0 0 0-.3 0L5.4 15.7a.25.25 0 0 1-.4-.2Z"/></svg>
<svg class="ic" style="left:1942.5px;top:1267px;" viewBox="0 0 16 16"><path d="M10.896 2H8.75V.75a.75.75 0 0 0-1.5 0V2H5.104a.25.25 0 0 0-.177.427l2.896 2.896a.25.25 0 0 0 .354 0l2.896-2.896A.25.25 0 0 0 10.896 2ZM8.75 15.25a.75.75 0 0 1-1.5 0V14H5.104a.25.25 0 0 1-.177-.427l2.896-2.896a.25.25 0 0 1 .354 0l2.896 2.896a.25.25 0 0 1-.177.427H8.75v1.25Zm-6.5-6.5a.75.75 0 0 0 0-1.5h-.5a.75.75 0 0 0 0 1.5h.5ZM6 8a.75.75 0 0 1-.75.75h-.5a.75.75 0 0 1 0-1.5h.5A.75.75 0 0 1 6 8Zm2.25.75a.75.75 0 0 0 0-1.5h-.5a.75.75 0 0 0 0 1.5h.5ZM12 8a.75.75 0 0 1-.75.75h-.5a.75.75 0 0 1 0-1.5h.5A.75.75 0 0 1 12 8Zm2.25.75a.75.75 0 0 0 0-1.5h-.5a.75.75 0 0 0 0 1.5h.5Z"/></svg>

<div class="t" style="left:71.70px;top:99.22px;font-size:21px;line-height:21px;font-weight:600;color:#f1f6fb;letter-spacing:0.129px;">Overview</div>
<div class="t" style="left:240.40px;top:99.22px;font-size:21px;line-height:21px;color:#f1f6fb;letter-spacing:0.436px;-webkit-text-stroke:0.2px currentColor;">Repositories</div>
<div class="t" style="left:482.20px;top:99.22px;font-size:21px;line-height:21px;color:#f1f6fb;letter-spacing:0.771px;-webkit-text-stroke:0.2px currentColor;">Projects</div>
<div class="t" style="left:637.20px;top:99.22px;font-size:21px;line-height:21px;color:#f1f6fb;letter-spacing:0.314px;-webkit-text-stroke:0.2px currentColor;">Packages</div>
<div class="t" style="left:806.70px;top:99.22px;font-size:21px;line-height:21px;color:#f1f6fb;letter-spacing:0.550px;-webkit-text-stroke:0.2px currentColor;">Stars</div>
<div class="t" style="left:388.00px;top:101.06px;font-size:18px;line-height:18px;font-weight:600;color:#f1f6fb;">4</div>
<div class="t" style="left:1852.50px;top:33.02px;font-size:21px;line-height:21px;color:#9298a0;letter-spacing:0.200px;-webkit-text-stroke:0.2px currentColor;">Type</div>
<div class="t" style="left:1934.90px;top:33.02px;font-size:21px;line-height:21px;color:#9298a0;letter-spacing:0.450px;-webkit-text-stroke:0.2px currentColor;">to search</div>
<div class="t" style="left:847.80px;top:199.98px;font-size:24px;line-height:24px;color:#f1f6fb;letter-spacing:0.258px;-webkit-text-stroke:0.2px currentColor;">Popular repositories</div>
<div class="t" style="left:2017.30px;top:201.36px;font-size:18px;line-height:18px;color:#5991f1;letter-spacing:0.522px;-webkit-text-stroke:0.2px currentColor;">Customize your pins</div>
<div class="t" style="left:874.50px;top:271.92px;font-size:21px;line-height:21px;font-weight:600;color:#5991f1;letter-spacing:0.364px;">javascript30</div>
<div class="t" style="left:873.50px;top:316.66px;font-size:18px;line-height:18px;color:#9298a0;letter-spacing:0.748px;-webkit-text-stroke:0.2px currentColor;">I'll try #javascript30</div>
<div class="t" style="left:1556.20px;top:272.52px;font-size:21px;line-height:21px;font-weight:600;color:#5991f1;letter-spacing:0.075px;">AngularJSPractice</div>
<div class="t" style="left:1557.20px;top:316.46px;font-size:18px;line-height:18px;color:#9298a0;letter-spacing:0.450px;-webkit-text-stroke:0.2px currentColor;">AngularJSPractice</div>
<div class="t" style="left:1580.30px;top:367.56px;font-size:18px;line-height:18px;color:#9298a0;letter-spacing:0.444px;-webkit-text-stroke:0.2px currentColor;">JavaScript</div>
<div class="t" style="left:873.50px;top:469.62px;font-size:21px;line-height:21px;font-weight:600;color:#5991f1;letter-spacing:0.625px;">lp-sample</div>
<div class="t" style="left:873.50px;top:513.36px;font-size:18px;line-height:18px;color:#9298a0;letter-spacing:0.700px;-webkit-text-stroke:0.2px currentColor;">lp sample</div>
<div class="t" style="left:897.30px;top:564.36px;font-size:18px;line-height:18px;color:#9298a0;letter-spacing:0.300px;-webkit-text-stroke:0.2px currentColor;">HTML</div>
<div class="t" style="left:1406.30px;top:275.86px;font-size:18px;line-height:18px;color:#9298a0;letter-spacing:0.760px;-webkit-text-stroke:0.45px currentColor;">Public</div>
<div class="t" style="left:2088.70px;top:275.86px;font-size:18px;line-height:18px;color:#9298a0;letter-spacing:0.760px;-webkit-text-stroke:0.45px currentColor;">Public</div>
<div class="t" style="left:1406.30px;top:473.36px;font-size:18px;line-height:18px;color:#9298a0;letter-spacing:0.760px;-webkit-text-stroke:0.45px currentColor;">Public</div>
<div class="t" style="left:848.80px;top:678.58px;font-size:24px;line-height:24px;color:#f1f6fb;letter-spacing:0.300px;-webkit-text-stroke:0.2px currentColor;">6 contributions in the last year</div>
<div class="t" style="left:1758.20px;top:686.36px;font-size:18px;line-height:18px;color:#9298a0;letter-spacing:0.680px;-webkit-text-stroke:0.2px currentColor;">Contribution settings</div>
<div class="t" style="left:917.70px;top:748.66px;font-size:18px;line-height:18px;color:#f1f6fb;letter-spacing:0.550px;-webkit-text-stroke:0.2px currentColor;">Jan</div>
<div class="t" style="left:955.62px;top:748.66px;font-size:18px;line-height:18px;color:#f1f6fb;letter-spacing:0.700px;-webkit-text-stroke:0.2px currentColor;">Feb</div>
<div class="t" style="left:1033.46px;top:748.66px;font-size:18px;line-height:18px;color:#f1f6fb;letter-spacing:1.150px;-webkit-text-stroke:0.2px currentColor;">Mar</div>
<div class="t" style="left:1131.76px;top:748.66px;font-size:18px;line-height:18px;color:#f1f6fb;letter-spacing:0.800px;-webkit-text-stroke:0.2px currentColor;">Apr</div>
<div class="t" style="left:1208.60px;top:748.66px;font-size:18px;line-height:18px;color:#f1f6fb;letter-spacing:0.600px;-webkit-text-stroke:0.2px currentColor;">May</div>
<div class="t" style="left:1287.44px;top:748.66px;font-size:18px;line-height:18px;color:#f1f6fb;letter-spacing:0.800px;-webkit-text-stroke:0.2px currentColor;">Jun</div>
<div class="t" style="left:1384.74px;top:748.66px;font-size:18px;line-height:18px;color:#f1f6fb;letter-spacing:0.800px;-webkit-text-stroke:0.2px currentColor;">Jul</div>
<div class="t" style="left:1462.58px;top:748.66px;font-size:18px;line-height:18px;color:#f1f6fb;letter-spacing:0.400px;-webkit-text-stroke:0.2px currentColor;">Aug</div>
<div class="t" style="left:1558.88px;top:748.66px;font-size:18px;line-height:18px;color:#f1f6fb;letter-spacing:0.900px;-webkit-text-stroke:0.2px currentColor;">Sep</div>
<div class="t" style="left:1636.72px;top:748.66px;font-size:18px;line-height:18px;color:#f1f6fb;letter-spacing:1.350px;-webkit-text-stroke:0.2px currentColor;">Oct</div>
<div class="t" style="left:1714.56px;top:748.66px;font-size:18px;line-height:18px;color:#f1f6fb;letter-spacing:0.850px;-webkit-text-stroke:0.2px currentColor;">Nov</div>
<div class="t" style="left:1811.86px;top:748.66px;font-size:18px;line-height:18px;color:#f1f6fb;letter-spacing:0.550px;-webkit-text-stroke:0.2px currentColor;">Dec</div>
<div class="t" style="left:1890.70px;top:748.66px;font-size:18px;line-height:18px;color:#f1f6fb;letter-spacing:0.400px;-webkit-text-stroke:0.2px currentColor;">Jan</div>
<div class="t" style="left:870.60px;top:788.96px;font-size:18px;line-height:18px;color:#f1f6fb;letter-spacing:1.450px;-webkit-text-stroke:0.2px currentColor;">Mon</div>
<div class="t" style="left:871.60px;top:828.06px;font-size:18px;line-height:18px;color:#f1f6fb;letter-spacing:0.450px;-webkit-text-stroke:0.2px currentColor;">Wed</div>
<div class="t" style="left:870.60px;top:867.06px;font-size:18px;line-height:18px;color:#f1f6fb;letter-spacing:0.800px;-webkit-text-stroke:0.2px currentColor;">Fri</div>
<div class="t" style="left:909.40px;top:919.26px;font-size:18px;line-height:18px;color:#9298a0;letter-spacing:0.594px;-webkit-text-stroke:0.2px currentColor;">Learn how we count contributions</div>
<div class="t" style="left:1712.20px;top:919.36px;font-size:18px;line-height:18px;color:#9298a0;letter-spacing:0.033px;-webkit-text-stroke:0.2px currentColor;">Less</div>
<div class="t" style="left:1861.90px;top:919.36px;font-size:18px;line-height:18px;color:#9298a0;letter-spacing:0.800px;-webkit-text-stroke:0.2px currentColor;">More</div>
<div class="t" style="left:2038.20px;top:687.99px;font-size:19.5px;line-height:19.5px;color:#ffffff;letter-spacing:0.533px;-webkit-text-stroke:0.2px currentColor;">2026</div>
<div class="t" style="left:2038.20px;top:750.99px;font-size:19.5px;line-height:19.5px;color:#9298a0;letter-spacing:0.233px;-webkit-text-stroke:0.2px currentColor;">2025</div>
<div class="t" style="left:2038.20px;top:813.99px;font-size:19.5px;line-height:19.5px;color:#9298a0;letter-spacing:0.233px;-webkit-text-stroke:0.2px currentColor;">2024</div>
<div class="t" style="left:2038.20px;top:876.99px;font-size:19.5px;line-height:19.5px;color:#9298a0;letter-spacing:0.233px;-webkit-text-stroke:0.2px currentColor;">2023</div>
<div class="t" style="left:2038.20px;top:939.99px;font-size:19.5px;line-height:19.5px;color:#9298a0;letter-spacing:0.233px;-webkit-text-stroke:0.2px currentColor;">2022</div>
<div class="t" style="left:2038.20px;top:1002.99px;font-size:19.5px;line-height:19.5px;color:#9298a0;letter-spacing:-0.667px;-webkit-text-stroke:0.2px currentColor;">2021</div>
<div class="t" style="left:2038.20px;top:1065.99px;font-size:19.5px;line-height:19.5px;color:#9298a0;letter-spacing:0.233px;-webkit-text-stroke:0.2px currentColor;">2020</div>
<div class="t" style="left:2038.20px;top:1128.99px;font-size:19.5px;line-height:19.5px;color:#9298a0;letter-spacing:-0.400px;-webkit-text-stroke:0.2px currentColor;">2019</div>
<div class="t" style="left:2038.20px;top:1191.99px;font-size:19.5px;line-height:19.5px;color:#9298a0;letter-spacing:-0.400px;-webkit-text-stroke:0.2px currentColor;">2018</div>
<div class="t" style="left:2038.20px;top:1254.99px;font-size:19.5px;line-height:19.5px;color:#9298a0;letter-spacing:-1.100px;-webkit-text-stroke:0.2px currentColor;">2017</div>
<div class="t" style="left:848.40px;top:1003.48px;font-size:24px;line-height:24px;color:#f1f6fb;letter-spacing:0.470px;-webkit-text-stroke:0.2px currentColor;">Contribution activity</div>
<div class="t" style="left:861.60px;top:1067.86px;font-size:18px;line-height:18px;font-weight:600;color:#f1f6fb;letter-spacing:0.050px;">January</div>
<div class="t" style="left:936.30px;top:1067.86px;font-size:18px;line-height:18px;font-weight:600;color:#9298a0;letter-spacing:2.400px;">2026</div>
<div class="t" style="left:909.80px;top:1134.98px;font-size:24px;line-height:24px;color:#f1f6fb;letter-spacing:0.184px;-webkit-text-stroke:0.2px currentColor;">Created 5 commits in 1 repository</div>
<div class="t" style="left:910.80px;top:1179.02px;font-size:21px;line-height:21px;color:#5991f1;letter-spacing:0.711px;-webkit-text-stroke:0.2px currentColor;text-decoration:underline;text-decoration-thickness:1.5px;text-underline-offset:4px;">mhtkhs359/lp-sample</div>
<div class="t" style="left:1135.80px;top:1181.56px;font-size:18px;line-height:18px;color:#9298a0;letter-spacing:0.675px;-webkit-text-stroke:0.2px currentColor;text-decoration:underline;text-decoration-thickness:1.5px;text-underline-offset:4px;">5 commits</div>
<div class="t" style="left:910.70px;top:1265.28px;font-size:24px;line-height:24px;color:#f1f6fb;letter-spacing:-0.021px;-webkit-text-stroke:0.2px currentColor;">Created 1 repository</div>
<div class="t" style="left:537.50px;top:745.62px;font-size:21px;line-height:21px;color:#f1f6fb;letter-spacing:0.736px;-webkit-text-stroke:0.45px currentColor;">Edit profile</div>
</body></html>
